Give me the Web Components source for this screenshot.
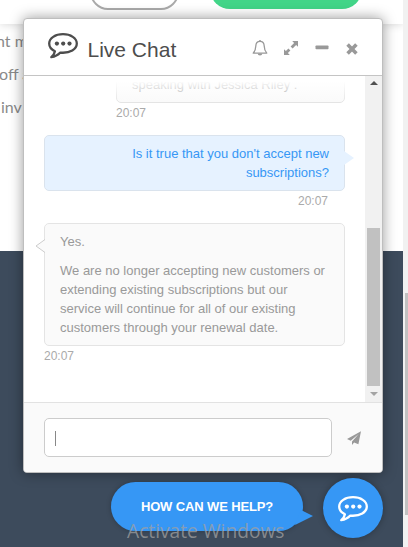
<!DOCTYPE html>
<html lang="en">
<head>
<meta charset="utf-8">
<title>Live Chat</title>
<style>
  body {
    margin: 0;
    width: 408px;
    height: 547px;
    overflow: hidden;
    font-family: "Liberation Sans", Arial, sans-serif;
  }
</style>
</head>
<body>
<chat-page>
  <page-backdrop></page-backdrop>
  <chat-window slot="window" heading="Live Chat">
    <chat-message narrow time="20:07"><p>speaking with Jessica Riley .</p></chat-message>
    <chat-message mine time="20:07"><p>Is it true that you don't accept new subscriptions?</p></chat-message>
    <chat-message tail time="20:07">
      <p>Yes.</p>
      <p>We are no longer accepting new customers or extending existing subscriptions but our service will continue for all of our existing customers through your renewal date.</p>
    </chat-message>
  </chat-window>
  <chat-launcher slot="launcher">HOW CAN WE HELP?</chat-launcher>
  <os-watermark slot="watermark">Activate Windows</os-watermark>
</chat-page>

<script>
const define = (name, html, setup) => {
  const tempt = document.createElement("template");
  tempt.innerHTML = html;

  customElements.define(name, class extends HTMLElement {
    constructor() {
      super();
      this.attachShadow({ mode: "open" });
      this.shadowRoot.appendChild(tempt.content.cloneNode(true));
    }

    connectedCallback() {
      if (setup) setup(this, this.shadowRoot);
    }
  });
};

const icons = {
  chat: `<svg width="32" height="28" viewBox="0 0 32 28" fill="none" stroke="currentColor">
    <path stroke-width="2.3" stroke-linejoin="round" d="M16 2.2C8.300 2.200 2.200 6.200 2.200 11.500c0 3.400 2.300 6.100 5.700 7.700-.4 2.400-1.600 4.300-3.600 6 4-.5 6.700-2 9-4.600 10 .9 16.500-3.500 16.500-9.100C29.800 6.200 23.700 2.200 16 2.200z"/>
    <g fill="currentColor" stroke="none"><circle cx="9.900" cy="11.600" r="2.1"/><circle cx="16.200" cy="11.600" r="2.1"/><circle cx="22.500" cy="11.600" r="2.1"/></g></svg>`,
  bell: `<svg width="16" height="18" viewBox="0 0 16 18" fill="none" stroke="currentColor">
    <path stroke-width="1.300" stroke-linejoin="round" d="M8 2.300c-2.700 0-4.100 1.900-4.200 4.600-.1 3.400-.7 5.300-2.600 7.200h13.600c-1.900-1.900-2.500-3.800-2.600-7.200C12.100 4.200 10.700 2.300 8 2.300z"/>
    <path stroke-width="1.500" d="M8 .9v1.400"/><path fill="currentColor" stroke="none" d="M5.700 14.500h4.600a2.300 2.100 0 0 1-4.600 0z"/></svg>`,
  expand: `<svg width="16" height="16" viewBox="0 0 16 16" fill="currentColor">
    <path d="M9.200 1H15v5.800l-1.900-1.900-3.500 3.500-2-2 3.500-3.500z"/><path d="M1 9.200v5.800h5.800l-1.900-1.900 2.500-2.500-2-2-2.500 2.500z"/></svg>`,
  minus: `<svg width="14" height="5" viewBox="0 0 14 5" fill="currentColor"><rect x=".5" y=".5" width="13" height="3.800" rx=".8"/></svg>`,
  close: `<svg width="12" height="12" viewBox="0 0 12 12" stroke="currentColor" stroke-width="3.600"><path d="M1.600 1.600l8.800 8.800M10.400 1.600l-8.800 8.800"/></svg>`,
  send: `<svg width="14" height="14" viewBox="0 0 14 14" fill="currentColor">
    <path d="M14 .2L0 8l3.700 1.700L11.700 3 5 10.600v3.300l2.100-2.500 4.300 1.800z"/></svg>`
};

define("ui-icon", `<style>:host { display: block; line-height: 0; } svg { display: block; }</style><span></span>`,
  (el, root) => {
    root.querySelector("span").innerHTML = icons[el.getAttribute("name")];
  });

define("chat-page", `
  <style>
    :host { display: block; position: relative; width: 408px; height: 547px; overflow: hidden; }
    slot[name]::slotted(*) { position: absolute; }
    slot[name=window]::slotted(*) { left: 23px; top: 18px; }
    slot[name=launcher]::slotted(*) { left: 111px; top: 478px; }
    slot[name=watermark]::slotted(*) { left: 127px; top: 517px; }
  </style>
  <slot></slot>
  <slot name="window"></slot>
  <slot name="launcher"></slot>
  <slot name="watermark"></slot>
`);

define("page-backdrop", `
  <style>
    :host { display: flex; height: 547px; }
    main { flex: 1; display: flex; flex-direction: column; min-width: 0; overflow: hidden; }
    .bar {
      display: flex; align-items: flex-end; gap: 31px; box-sizing: border-box;
      height: 24px; padding: 0 0 14px 90px; background: #fff;
      box-shadow: 0 1px 8px rgba(0, 0, 0, .15); position: relative;
    }
    .ghost { width: 89px; height: 36px; box-sizing: border-box; border: 2px solid #aaa; border-radius: 18px; }
    .solid { width: 152px; height: 40px; border-radius: 20px; background: #42d588; margin-bottom: 1px; }
    .copy {
      height: 227px; box-sizing: border-box; background: #fff;
      font: 16px/33px Lato, sans-serif; color: #8a8a8a; white-space: pre;
    }
    /* the paragraph runs on from beyond the left edge */
    .copy div:first-child { margin-left: -4px; }
    .copy div:nth-child(2) { margin-left: -1px; }
    .copy div:last-child { padding-left: 1px; }
    .footer { flex: 1; background: #3d4b5c; }
    .track { width: 5px; background: #f1f1f1; padding-top: 293px; box-sizing: border-box; }
    .thumb { height: 222px; margin-left: 2px; background: #c1c1c1; }
  </style>
  <main>
    <div class="bar"><div class="ghost"></div><div class="solid"></div></div>
    <div class="copy"><div>nt m</div><div>off a</div><div>inv</div></div>
    <div class="footer"></div>
  </main>
  <div class="track"><div class="thumb"></div></div>
`);

define("chat-window", `
  <style>
    :host {
      display: flex; flex-direction: column; box-sizing: border-box;
      width: 360px; height: 455px; overflow: hidden;
      background: #fff; border: 1px solid #bebebe; border-radius: 4px;
      box-shadow: 0 0 14px rgba(0, 0, 0, .4);
    }
    header {
      display: flex; align-items: center; flex: none; box-sizing: border-box;
      height: 57px; padding: 0 24px 0 23px; border-bottom: 1px solid #c4c4c4; color: #4d4d4d;
    }
    header ui-icon[name=chat] { margin-top: -2px; }
    h1 { flex: 1; margin: 5px 0 0 8.500px; font-size: 21px; font-weight: 400; line-height: 28px; }
    nav { display: flex; align-items: center; color: #999; }
    nav ui-icon { margin-left: 15px; }
    nav ui-icon[name=bell], nav ui-icon[name=expand] { margin-top: 2px; }
    nav ui-icon[name=close] { margin: 4px 0 0 17px; }
    nav ui-icon[name=minus] { margin: 1px 0 0 16px; }
    .body { display: flex; height: 326px; flex: none; }
    .log {
      flex: 1; display: flex; flex-direction: column; justify-content: flex-end;
      box-sizing: border-box; padding: 0 20px 24px; overflow: hidden; position: relative;
    }
    /* fades messages out as they scroll under the header */
    .log::before {
      content: ""; position: absolute; z-index: 1; left: 0; right: 0; top: 0; height: 26px;
      background: linear-gradient(#fff 20%, rgba(255, 255, 255, 0));
    }
    .scroll {
      width: 17px; box-sizing: border-box; padding: 5px 2px 6px; background: #f1f1f1;
      display: flex; flex-direction: column; align-items: center;
    }
    .up, .down { border: solid transparent; border-width: 0 4px; height: 0; }
    .up { border-bottom: 4px solid #505050; }
    .down { border-top: 4px solid #a3a3a3; }
    .thumb { width: 13px; height: 158px; margin: auto 0 6px; background: #c1c1c1; }
    footer {
      flex: 1; display: flex; align-items: center; gap: 15px;
      padding: 0 20px; background: #fafafa; border-top: 1px solid #e2e2e2; color: #999;
    }
    .field {
      display: flex; align-items: center; box-sizing: border-box; width: 288px; height: 39px;
      padding-left: 10px; background: #fff; border: 1px solid #ccc; border-radius: 5px;
    }
    .caret { width: 1px; height: 15px; background: #888; margin-top: 2px; }
  </style>
  <header>
    <ui-icon name="chat"></ui-icon>
    <h1></h1>
    <nav>
      <ui-icon name="bell"></ui-icon>
      <ui-icon name="expand"></ui-icon>
      <ui-icon name="minus"></ui-icon>
      <ui-icon name="close"></ui-icon>
    </nav>
  </header>
  <div class="body">
    <div class="log"><slot></slot></div>
    <div class="scroll"><div class="up"></div><div class="thumb"></div><div class="down"></div></div>
  </div>
  <footer>
    <div class="field"><div class="caret"></div></div>
    <ui-icon name="send"></ui-icon>
  </footer>
`, (el, root) => {
  root.querySelector("h1").textContent = el.getAttribute("heading");
});

define("chat-message", `
  <style>
    :host { display: block; flex: none; margin-bottom: 12px; font-size: 13px; line-height: 19px; color: #999; }
    :host([narrow]) { margin-left: 72px; }
    :host([mine]) { color: #3697f5; text-align: right; }
    .bubble {
      position: relative; padding: 8px 15px; background: #fafafa;
      border: 1px solid #e4e4e4; border-radius: 5px;
    }
    :host([mine]) .bubble { background: #e6f2ff; border-color: #dae3ed; padding-left: 60px; }
    ::slotted(p) { margin: 0; }
    ::slotted(p:not(:first-child)) { margin-top: 10px; }
    .pointer { display: none; position: absolute; }
    :host([mine]) .right { display: block; right: -10px; top: 14px; }
    :host([tail]) .left { display: block; left: -10px; top: 14px; }
    .time { font-size: 12px; line-height: 20px; color: #aaa; }
    :host([mine]) .time { padding-right: 17px; }
  </style>
  <div class="bubble">
    <slot></slot>
    <svg class="pointer right" width="10" height="16" viewBox="0 0 10 16"><path fill="#e6f2ff" d="M0 1l10 7-10 7z"/></svg>
    <svg class="pointer left" width="11" height="16" viewBox="0 0 11 16"><path fill="#fafafa" d="M11 1L1 8l10 7z"/><path fill="none" stroke="#ccc" d="M10 1.500L1 8l9 6.500"/></svg>
  </div>
  <div class="time"></div>
`, (el, root) => {
  root.querySelector(".time").textContent = el.getAttribute("time");
});

define("chat-launcher", `
  <style>
    :host { display: flex; align-items: flex-start; gap: 20px; color: #fff; }
    .pill, .round { display: flex; align-items: center; justify-content: center; background: #3697f5; }
    .pill {
      position: relative; width: 192px; height: 49px; margin-top: 4px; border-radius: 25px;
      font-size: 13px; font-weight: 700; letter-spacing: -.13px;
      box-shadow: 0 0 5px rgba(0, 0, 0, .25);
    }
    .pill svg { position: absolute; right: -10px; top: 28px; }
    .round {
      box-sizing: border-box; width: 60px; height: 60px; padding-top: 2px;
      border-radius: 50%; box-shadow: 0 0 7px rgba(0, 0, 0, .3);
    }
  </style>
  <div class="pill"><span><slot></slot></span>
    <svg width="20" height="16" viewBox="0 0 20 16"><path fill="#3697f5" d="M8 0l12 6L2 15z"/></svg>
  </div>
  <div class="round"><ui-icon name="chat"></ui-icon></div>
`);

define("os-watermark", `
  <style>
    :host { display: block; font: 19.200px/28px "Open Sans", sans-serif; color: rgba(160, 160, 160, .75); white-space: nowrap; }
  </style>
  <slot></slot>
`);
</script>
</body>
</html>
